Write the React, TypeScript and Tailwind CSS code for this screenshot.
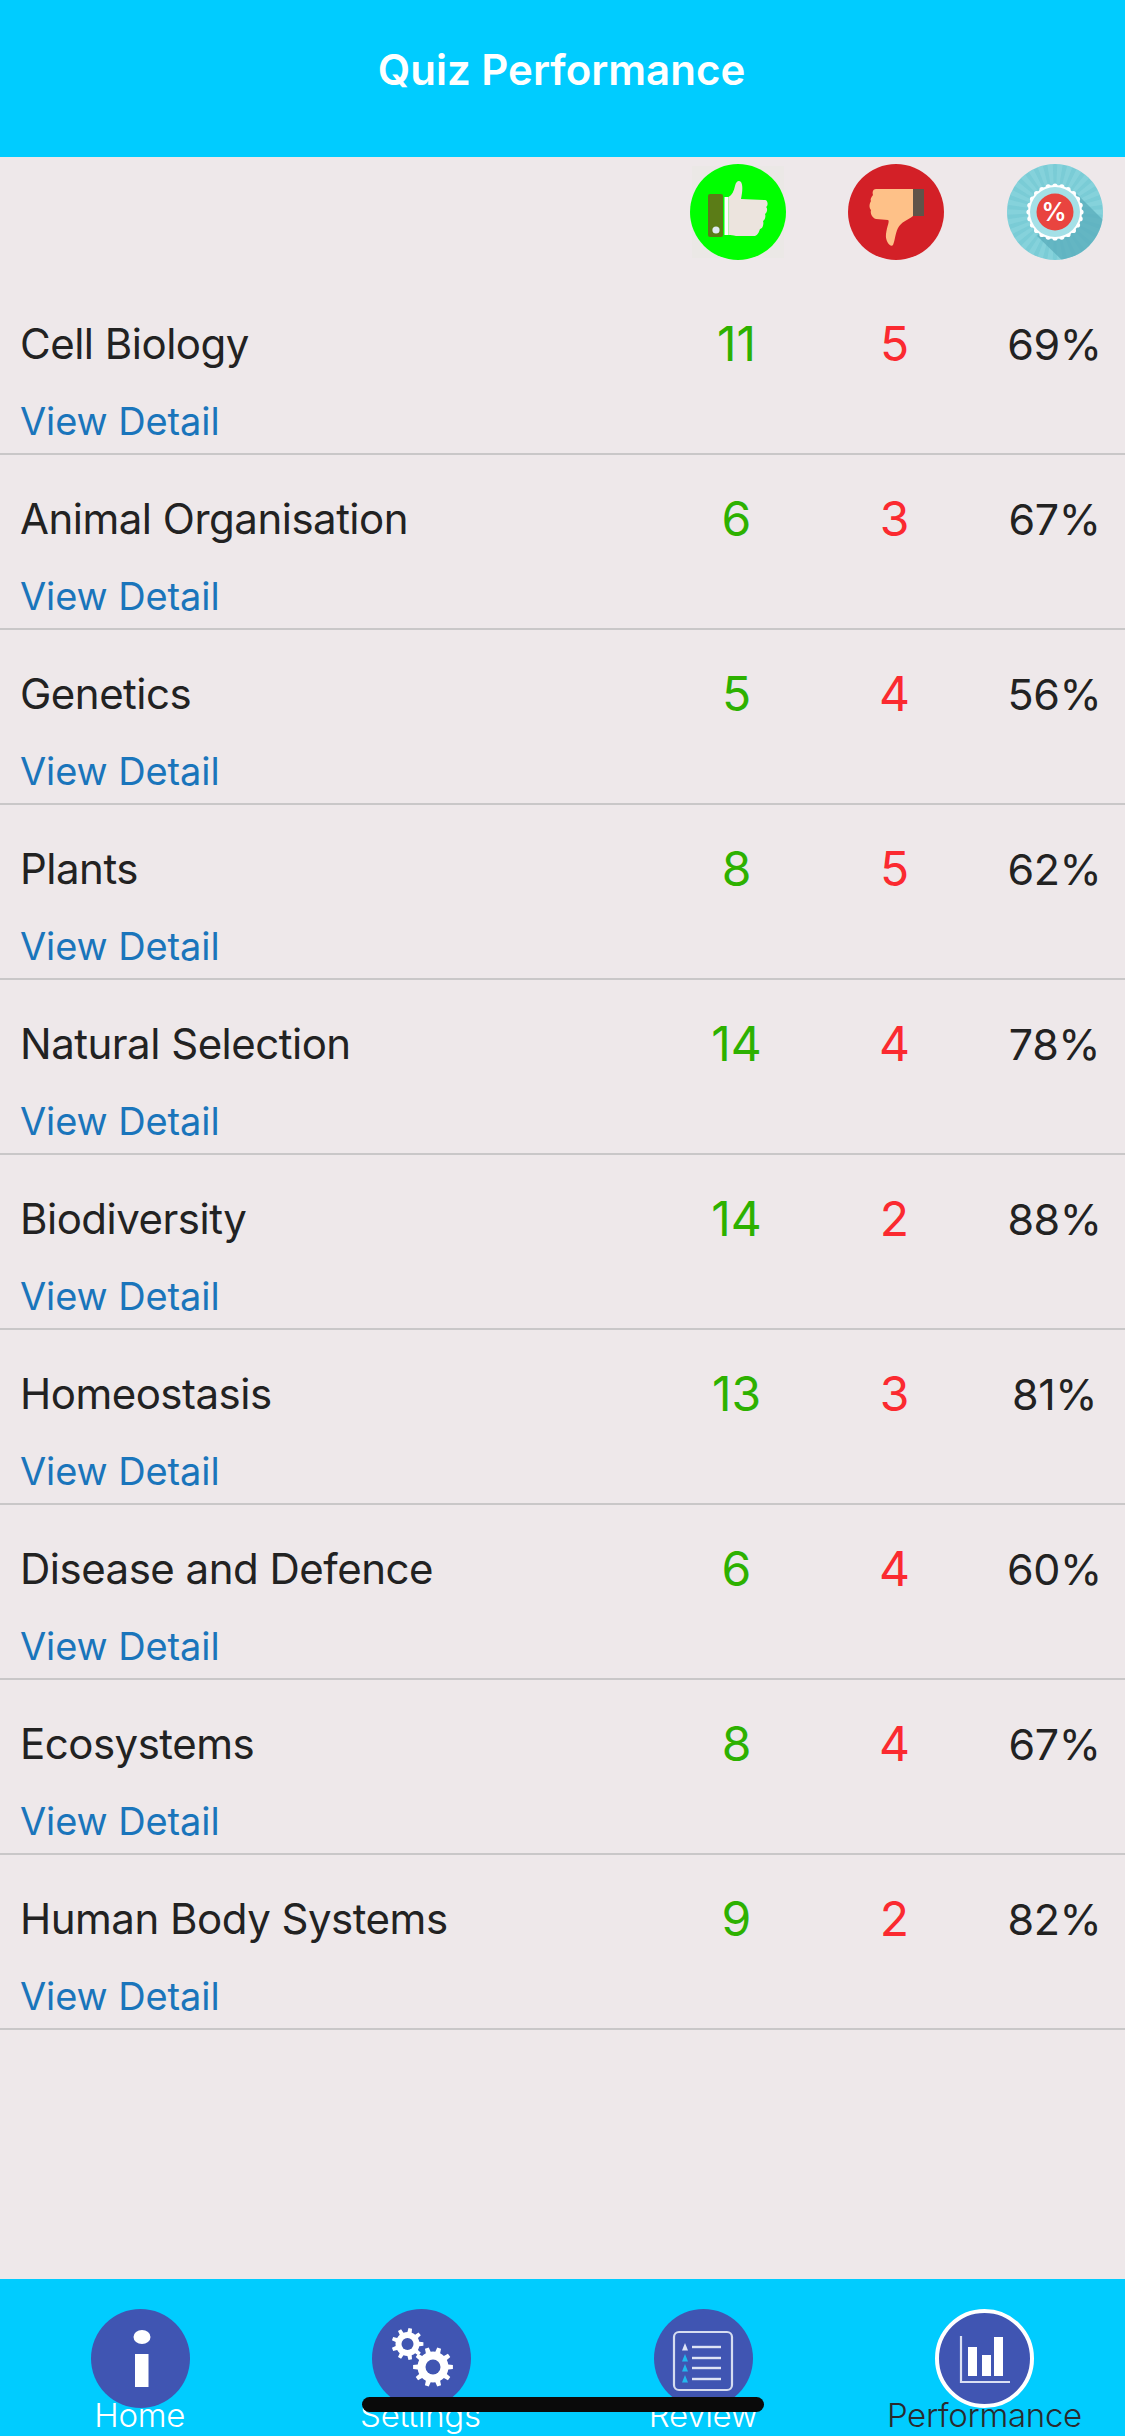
import React from "react";

const rows: [string, number, number, string][] = [
  ["Cell Biology", 11, 5, "69%"],
  ["Animal Organisation", 6, 3, "67%"],
  ["Genetics", 5, 4, "56%"],
  ["Plants", 8, 5, "62%"],
  ["Natural Selection", 14, 4, "78%"],
  ["Biodiversity", 14, 2, "88%"],
  ["Homeostasis", 13, 3, "81%"],
  ["Disease and Defence", 6, 4, "60%"],
  ["Ecosystems", 8, 4, "67%"],
  ["Human Body Systems", 9, 2, "82%"],
];

function gearPath(cx: number, cy: number, r: number, R: number, teeth: number) {
  let d = "";
  const step = (Math.PI * 2) / teeth;
  for (let i = 0; i < teeth; i++) {
    const a = i * step;
    const pts: [number, number][] = [
      [r, a - step * 0.5],
      [r, a - step * 0.26],
      [R, a - step * 0.16],
      [R, a + step * 0.16],
      [r, a + step * 0.26],
    ];
    pts.forEach(([rad, an], j) => {
      d += `${i === 0 && j === 0 ? "M" : "L"}${(cx + rad * Math.cos(an)).toFixed(2)} ${(cy + rad * Math.sin(an)).toFixed(2)} `;
    });
  }
  return d + "Z";
}

function ThumbUp() {
  return (
    <svg width="96" height="96" viewBox="0 0 96 96">
      <rect x="2" y="2" width="92" height="92" fill="#ebe8e6" />
      <circle cx="48" cy="48" r="48" fill="#00ff00" />
      <rect x="18" y="30" width="15" height="43" rx="2" fill="#5b7c17" />
      <circle cx="26" cy="66" r="3.6" fill="#dfe9f2" />
      <rect x="34.5" y="33" width="4" height="38" fill="#ffffff" />
      <path d="M38.5 33 C42 31 44 27 45 22 C46 17 49 16 51 18 C53 21 52.500 28 51 35 L75 36 C78 36 78.500 42 76 43 C78 44 77 49 75 50 C76 52 75 56 73 57 C74 59 73 65 70 65 C68 71 66 72 64 72 L46 72 C43 71 41 71 38.500 71 Z" fill="#ece4de" />
    </svg>
  );
}

function ThumbDown() {
  return (
    <svg width="96" height="96" viewBox="0 0 96 96">
      <circle cx="48" cy="48" r="48" fill="#d32027" />
      <rect x="65" y="25" width="11" height="27" fill="#5f5349" />
      <path d="M65 25 L28 25 C25 25 24 28 25 31 C23 33 22 36 23 37 C21 40 21 44 23 46 C22 49 24 54 28 55 L40 56 C42 57 39 62 38 70 C37 78 43 84 45 81 C47 77 47 70 50 64 C53 58 60 56 65 52 Z" fill="#fec188" />
    </svg>
  );
}

function PercentBadge() {
  const rays = Array.from({ length: 30 }, (_, i) => i * 12);
  const dots = Array.from({ length: 24 }, (_, i) => (i * Math.PI * 2) / 24);
  return (
    <svg width="96" height="96" viewBox="0 0 96 96">
      <defs>
        <clipPath id="pc"><circle cx="48" cy="48" r="48" /></clipPath>
      </defs>
      <g clipPath="url(#pc)">
        <rect width="96" height="96" fill="#7accd6" />
        {rays.map((a) => (
          <path key={a} d="M48 48 L100 45 L100 51 Z" transform={`rotate(${a} 48 48)`} fill="#9cdce4" opacity="0.35" />
        ))}
        <path d="M70 30 L100 60 L100 100 L59 100 L30 72 Z" fill="#5aacbb" opacity="0.75" />
      </g>
      <circle cx="48" cy="48" r="27" fill="#ffffff" />
      {dots.map((a, i) => (
        <circle key={i} cx={48 + 26 * Math.cos(a)} cy={48 + 26 * Math.sin(a)} r="2.6" fill="#ffffff" />
      ))}
      <circle cx="48" cy="48" r="25" fill="#a4e0e7" />
      <circle cx="48" cy="48" r="18.500" fill="#e9443f" />
      <text x="47" y="57" textAnchor="middle" fontSize="25" fontWeight="600" fill="#ffffff" fontFamily="Inter, sans-serif">%</text>
    </svg>
  );
}

function InfoIcon() {
  return (
    <svg width="99" height="99" viewBox="0 0 99 99">
      <circle cx="49.500" cy="49.500" r="49.500" fill="#4055b2" />
      <ellipse cx="51" cy="28" rx="8.500" ry="7" fill="#ffffff" />
      <rect x="44" y="45" width="13.500" height="33" fill="#ffffff" />
    </svg>
  );
}

function GearsIcon() {
  return (
    <svg width="99" height="99" viewBox="0 0 99 99">
      <circle cx="49.500" cy="49.500" r="49.500" fill="#4055b2" />
      <path d={gearPath(35.5, 35, 12, 16, 9)} fill="#ffffff" />
      <circle cx="35.5" cy="35" r="6" fill="#4055b2" />
      <path d={gearPath(61, 58, 15.500, 20, 10)} fill="#ffffff" />
      <circle cx="61" cy="58" r="7.500" fill="#4055b2" />
    </svg>
  );
}

function ReviewIcon() {
  const ys = [38, 49, 59, 70];
  return (
    <svg width="99" height="99" viewBox="0 0 99 99">
      <circle cx="49.500" cy="49.500" r="49.500" fill="#4055b2" />
      <rect x="20" y="23" width="58" height="58" rx="5" fill="none" stroke="#d5dcf0" strokeWidth="2.200" />
      {ys.map((y) => (
        <g key={y}>
          <rect x="38" y={y - 1.200} width="29" height="2.400" fill="#dde3f5" />
          <path d={`M28 ${y + 3.500} L31 ${y - 4} L34 ${y + 3.500} Z`} fill={y === 38 ? "#dde3f5" : "#22b8ee"} />
        </g>
      ))}
    </svg>
  );
}

function ChartIcon() {
  return (
    <svg width="99" height="99" viewBox="0 0 99 99">
      <circle cx="49.500" cy="49.500" r="47.500" fill="#4055b2" stroke="#ffffff" strokeWidth="4" />
      <path d="M26 27 L26 73 L75 73" fill="none" stroke="#d9dff3" strokeWidth="2.200" />
      <rect x="33" y="38" width="9" height="29" fill="#ffffff" />
      <rect x="47" y="46" width="9" height="21" fill="#ffffff" />
      <rect x="59" y="28" width="9" height="39" fill="#ffffff" />
    </svg>
  );
}

const tabs = [
  { label: "Home", icon: <InfoIcon />, cls: "text-white", lab: "pr-[2px]" },
  { label: "Settings", icon: <GearsIcon />, cls: "text-white", lab: "pr-[3px]" },
  { label: "Review", icon: <ReviewIcon />, cls: "text-white", lab: "" },
  { label: "Performance", icon: <ChartIcon />, cls: "text-[#2a2a2e]", lab: "" },
];

export default function App() {
  return (
    <div className="relative w-[1125px] h-[2436px] flex flex-col bg-[#eee8ea] overflow-hidden font-['Inter','Liberation_Sans',sans-serif]">
      <header className="h-[157px] shrink-0 bg-[#00ccff] flex items-center justify-center pb-[17px] pr-[2px]">
        <h1 className="text-[42px] font-semibold text-white leading-none">Quiz Performance</h1>
      </header>

      <main className="flex-1 flex flex-col">
        <div className="h-[123px] flex items-start pt-[7px] pl-[659px]">
          <div className="w-[158px] flex justify-center"><ThumbUp /></div>
          <div className="w-[158px] flex justify-center"><ThumbDown /></div>
          <div className="w-[150px] flex justify-center pl-[10px]"><PercentBadge /></div>
        </div>

        {rows.map(([name, right, wrong, pct]) => (
          <div key={name} className="h-[175px] border-b-2 border-[#c9c7c8] pl-[20px] flex flex-col">
            <div className="flex items-center h-[64px] mt-[32px] leading-none">
              <div className="flex-1 text-[42px] tracking-[-0.5px] text-[#222222]">{name}</div>
              <div className="w-[158px] text-center pr-[3px] text-[48px] text-[#2db100]">{right}</div>
              <div className="w-[158px] text-center pr-[3px] text-[48px] text-[#fb2a30]">{wrong}</div>
              <div className="w-[150px] text-center pl-[9px] text-[43px] tracking-[-0.4px] text-[#222222]">{pct}</div>
            </div>
            <a className="text-[38px] leading-none mt-[26px] tracking-[-0.1px] text-[#1a75bb]">View Detail</a>
          </div>
        ))}
      </main>

      <nav className="h-[157px] shrink-0 bg-[#00ccff] grid grid-cols-4 pt-[30px]">
        {tabs.map((t) => (
          <div key={t.label} className={`flex flex-col items-center ${t.cls}`}>
            {t.icon}
            <span className={`text-[33px] leading-none font-light tracking-[-0.3px] -mt-[9px] whitespace-nowrap ${t.lab}`}>{t.label}</span>
          </div>
        ))}
      </nav>

      <div className="absolute left-[362px] top-[2397px] w-[402px] h-[15px] rounded-full bg-[#0a0a0a]" />
    </div>
  );
}
